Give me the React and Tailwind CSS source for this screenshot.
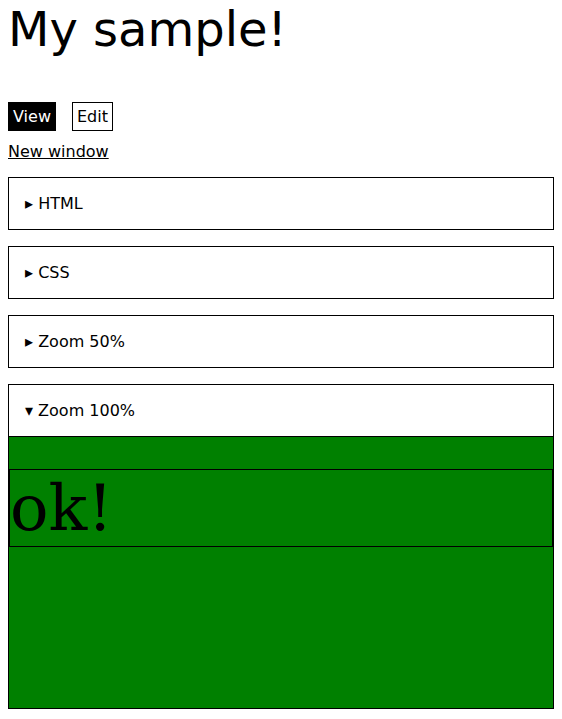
export default function App() {
  const sections = ['HTML', 'CSS', 'Zoom 50%']

  return (
    <div className="px-2 pb-2 font-['DejaVu_Sans',sans-serif] text-base leading-[normal] text-black bg-white">
      <h1 className="text-[48px] leading-[56px] font-normal pt-[1px]">My sample!</h1>

      <div className="flex gap-4 mt-[45px]">
        <button className="bg-black text-white border border-black px-1 py-1 leading-[normal]">View</button>
        <button className="bg-white text-black border border-black px-1 py-1 leading-[normal]">Edit</button>
      </div>

      <div className="mt-[11px]">
        <a href="#" className="underline">New window</a>
      </div>

      {sections.map((s) => (
        <details key={s} className="mt-4 border border-black">
          <summary className="p-4 cursor-pointer list-none">▸ {s}</summary>
        </details>
      ))}

      <details open className="mt-4 border border-black">
        <summary className="p-4 cursor-pointer list-none">▾ Zoom 100%</summary>
        <div className="h-[272px] bg-[#008000] border-t border-black pt-8">
          <div className="border border-black font-['DejaVu_Serif',serif] text-[64px] leading-[76px]">
            ok!
          </div>
        </div>
      </details>
    </div>
  )
}
